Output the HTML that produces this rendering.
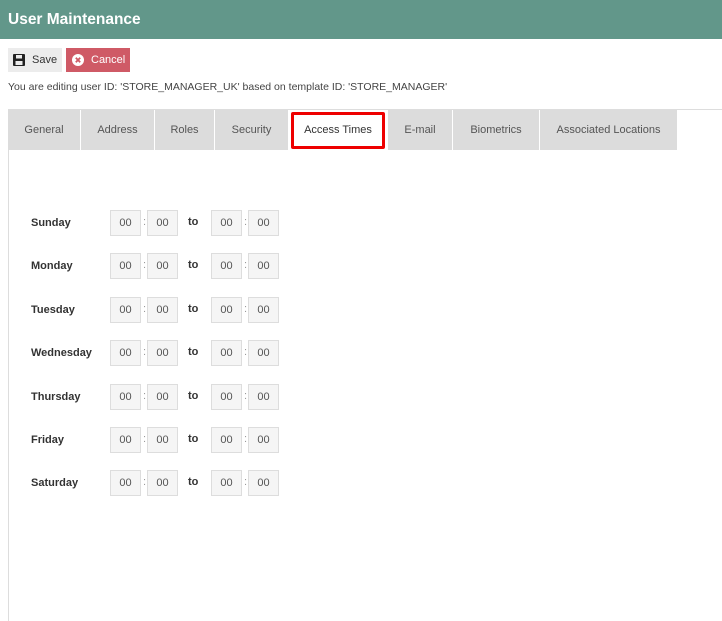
<!DOCTYPE html>
<html><head><style>
body{margin:0;width:722px;height:621px;background:#fff;font-family:"Liberation Sans",sans-serif;position:relative;overflow:hidden;color:#333}
.hdr{position:absolute;left:0;top:0;width:722px;height:39px;background:#62978a;color:#fff;font-weight:bold;font-size:15.5px;line-height:39px;padding-left:8px;box-sizing:border-box}
.btn{position:absolute;top:48px;height:24px;font-size:11px;line-height:24px;box-sizing:border-box}
.save{left:8px;width:54px;background:#ececec;color:#333;padding-left:24px}
.cancel{left:66px;width:64px;background:#cf5a66;color:#fff;padding-left:25px}
.msg{position:absolute;left:8px;top:81px;font-size:10.5px;color:#444}
.tabs{position:absolute;left:8px;top:109px;width:714px;border-top:1px solid #ddd}
.tab{position:absolute;top:110px;height:40px;background:#dcdcdc;font-size:11px;color:#555;text-align:center;line-height:40px}
.lb{position:absolute;left:8px;top:150px;width:1px;height:471px;background:#ddd}
.day{position:absolute;left:31px;font-size:11px;font-weight:bold;color:#333}
.in{position:absolute;width:31px;height:26px;border:1px solid #ddd;background:#f5f5f5;box-sizing:border-box;font-size:11px;color:#555;text-align:center;line-height:24px}
.c{position:absolute;font-size:11px;color:#999}
.to{position:absolute;left:188px;font-size:11px;font-weight:bold}
</style></head><body>
<div class="hdr">User Maintenance</div>
<div class="btn save"><svg style="position:absolute;left:5px;top:6px" width="12" height="12" viewBox="0 0 12 12"><rect x="0" y="0" width="12" height="12" rx="1" fill="#222"/><rect x="3" y="1" width="6" height="3.5" fill="#ececec"/><rect x="2.5" y="7" width="7" height="4" fill="#ececec"/></svg>Save</div>
<div class="btn cancel"><svg style="position:absolute;left:6px;top:6px" width="12" height="12" viewBox="0 0 12 12"><circle cx="6" cy="6" r="6" fill="#fff"/><path d="M3.8 3.8L8.2 8.2M8.2 3.8L3.8 8.2" stroke="#cf5a66" stroke-width="1.8"/></svg>Cancel</div>
<div class="msg">You are editing user ID: 'STORE_MANAGER_UK' based on template ID: 'STORE_MANAGER'</div>
<div class="tabs"></div>
<div class="tab" style="left:8px;width:72px">General</div>
<div class="tab" style="left:81px;width:73px">Address</div>
<div class="tab" style="left:155px;width:59px">Roles</div>
<div class="tab" style="left:215px;width:73px">Security</div>
<div class="tab" style="left:289px;width:98px;background:#fff"><div style="position:absolute;left:2px;top:2px;width:94px;height:37px;border:3px solid #e00;box-sizing:border-box;border-radius:2px;line-height:31px;color:#333">Access Times</div></div>
<div class="tab" style="left:388px;width:64px">E-mail</div>
<div class="tab" style="left:453px;width:86px">Biometrics</div>
<div class="tab" style="left:540px;width:137px">Associated Locations</div>
<div class="lb"></div>
<div id="rows"></div>
<script>
var d=["Sunday","Monday","Tuesday","Wednesday","Thursday","Friday","Saturday"],h="";
d.forEach(function(n,i){var y=210+i*43.4;
h+='<div class="day" style="top:'+(y+7)+'px">'+n+'</div>';
[110,147,211,248].forEach(function(x){h+='<div class="in" style="left:'+x+'px;top:'+y+'px">00</div>'});
h+='<div class="c" style="left:143px;top:'+(y+6)+'px">:</div><div class="c" style="left:244px;top:'+(y+6)+'px">:</div>';
h+='<div class="to" style="top:'+(y+6)+'px">to</div>';});
document.getElementById("rows").innerHTML=h;
</script>
</body></html>
